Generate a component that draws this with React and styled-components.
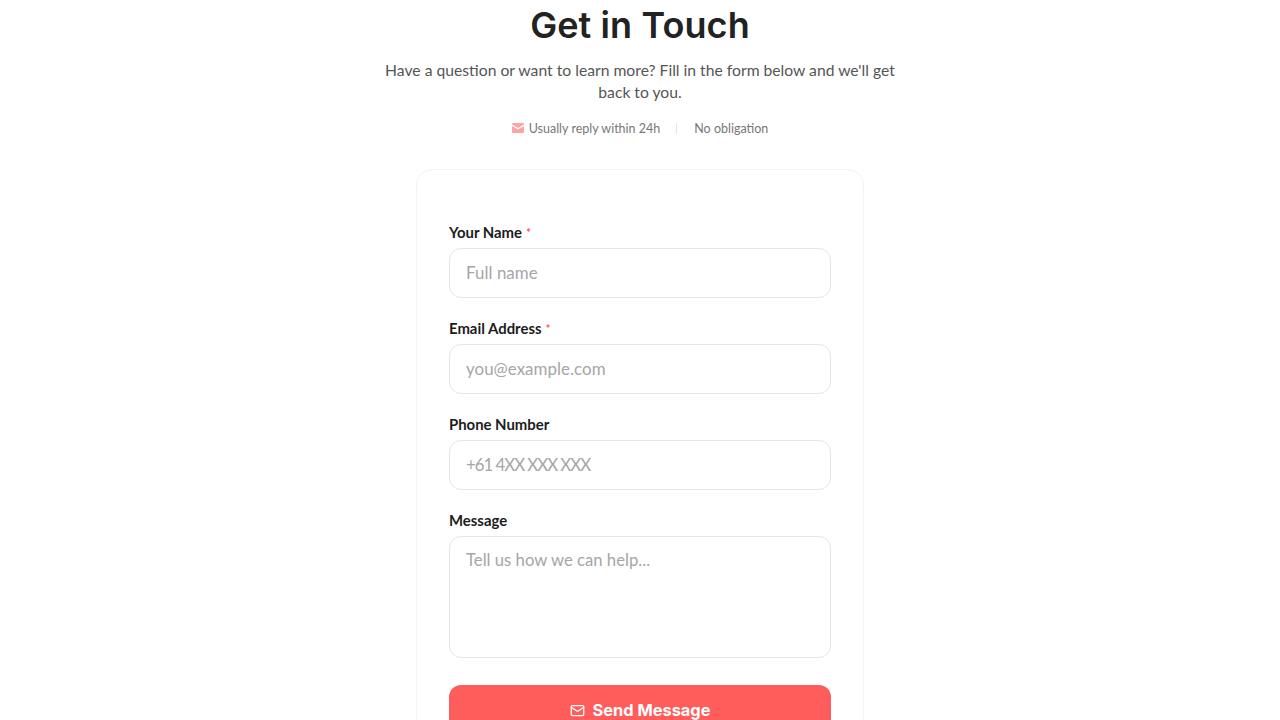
import React from "react";
import styled, { createGlobalStyle } from "styled-components";
import { Mail } from "lucide-react";

const Global = createGlobalStyle`
  html, body { margin: 0; padding: 0; background: #fff; }
  body { font-family: "Lato", "Liberation Sans", sans-serif; }
  * { box-sizing: border-box; }
`;

const Page = styled.main`
  display: flex;
  flex-direction: column;
  align-items: center;
  padding-bottom: 40px;
`;

const Header = styled.header`
  width: 520px;
  display: flex;
  flex-direction: column;
  align-items: center;
  text-align: center;
  margin-bottom: 30px;
`;

const Title = styled.h1`
  margin: 0 0 13px;
  height: 46px;
  font-family: "Inter", sans-serif;
  font-size: 36px;
  line-height: 50px;
  font-weight: 600;
  color: #222;
  letter-spacing: 0.1px;
`;

const Subtitle = styled.p`
  margin: 0 0 14px;
  width: 512px;
  font-size: 15.7px;
  line-height: 22px;
  color: #555;
`;

const Meta = styled.div`
  display: flex;
  align-items: center;
  height: 22px;
  font-size: 12.5px;
  color: #777;
`;

const MetaItem = styled.span`
  display: inline-flex;
  align-items: center;
  gap: 5px;
`;

const MetaDivider = styled.span`
  width: 1px;
  height: 11px;
  background: #e4e4e4;
  margin: 0 17px 0 16px;
`;

const EnvelopeIcon = styled.svg`
  width: 12px;
  height: 10px;
  display: block;
`;

const Card = styled.section`
  width: 448px;
  border: 1px solid #f3f3f3;
  border-radius: 16px;
  padding: 52px 32px 32px;
  background: #fff;
`;

const Form = styled.form`
  display: flex;
  flex-direction: column;
  gap: 20px;
`;

const Field = styled.div`
  display: flex;
  flex-direction: column;
  gap: 5px;
`;

const Label = styled.label`
  font-size: 14.9px;
  line-height: 21px;
  font-weight: 700;
  color: #1c1c1c;
`;

const Required = styled.span`
  color: #ff5a5a;
  font-size: 12px;
  margin-left: 4px;
  vertical-align: 1px;
`;

const Input = styled.input`
  width: 100%;
  height: 50px;
  padding: 0 16px 2px;
  border: 1px solid #e6e6e6;
  border-radius: 12px;
  background: #fff;
  font-family: inherit;
  font-size: 16.9px;
  color: #222;
  outline: none;
  letter-spacing: ${(p) => (p.$tight ? "-1.05px" : "0.05px")};
  &::placeholder { color: #a6a6a6; opacity: 1; }
`;

const TextArea = styled.textarea`
  display: block;
  width: 100%;
  height: 122px;
  padding: 12px 16px;
  border: 1px solid #e6e6e6;
  border-radius: 12px;
  background: #fff;
  font-family: inherit;
  font-size: 16.7px;
  line-height: 22px;
  color: #222;
  outline: none;
  resize: none;
  &::placeholder { color: #a6a6a6; opacity: 1; }
`;

const Submit = styled.button`
  margin-top: 7px;
  width: 100%;
  height: 50px;
  border: 0;
  border-radius: 12px;
  background: #ff5c5c;
  color: #fff;
  display: flex;
  align-items: center;
  justify-content: center;
  gap: 8px;
  font-family: "Inter", sans-serif;
  font-size: 16.4px;
  font-weight: 700;
`;

export default function App() {
  return (
    <Page>
      <Global />
      <Header>
        <Title>Get in Touch</Title>
        <Subtitle>
          Have a question or want to learn more? Fill in the form below and we'll get back to you.
        </Subtitle>
        <Meta>
          <MetaItem>
            <EnvelopeIcon viewBox="0 0 12 10" aria-hidden="true">
              <path d="M1 0h10a1 1 0 0 1 1 1v.6L6 5 0 1.6V1a1 1 0 0 1 1-1z" fill="#ffa3a3" />
              <path d="M0 3l6 3.4L12 3v6a1 1 0 0 1-1 1H1a1 1 0 0 1-1-1z" fill="#ffa3a3" />
            </EnvelopeIcon>
            Usually reply within 24h
          </MetaItem>
          <MetaDivider />
          <MetaItem>No obligation</MetaItem>
        </Meta>
      </Header>
      <Card>
        <Form onSubmit={(e) => e.preventDefault()}>
          <Field>
            <Label>Your Name<Required>*</Required></Label>
            <Input placeholder="Full name" />
          </Field>
          <Field>
            <Label>Email Address<Required>*</Required></Label>
            <Input placeholder="you@example.com" />
          </Field>
          <Field>
            <Label>Phone Number</Label>
            <Input $tight placeholder="+61 4XX XXX XXX" />
          </Field>
          <Field>
            <Label>Message</Label>
            <TextArea placeholder="Tell us how we can help..." />
          </Field>
          <Submit type="submit">
            <Mail size={15} strokeWidth={2} />
            Send Message
          </Submit>
        </Form>
      </Card>
    </Page>
  );
}
